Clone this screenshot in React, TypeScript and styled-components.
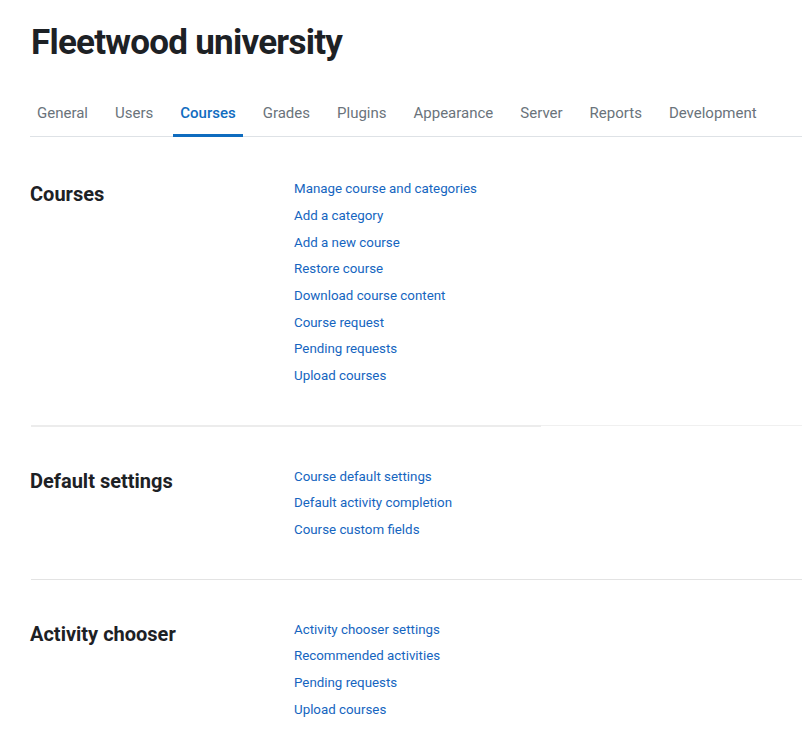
import React from "react";
import styled, { createGlobalStyle } from "styled-components";

const GlobalStyle = createGlobalStyle`
  html, body { margin: 0; padding: 0; background: #ffffff; }
  body { font-family: Roboto, "Liberation Sans", Arial, sans-serif; color: #1d2125; }
  * { box-sizing: border-box; }
`;

const Page = styled.div`
  padding: 21px 0 0 30px;
`;

const Title = styled.h1`
  margin: 0 0 0 1px;
  font-size: 35px;
  letter-spacing: -0.75px;
  line-height: 44px;
  font-weight: 700;
  color: #1d2125;
`;

const Tabs = styled.nav`
  display: flex;
  gap: 13px;
  margin-top: 29px;
  border-bottom: 1px solid #dee2e6;
  margin-bottom: 2px;
`;

const Tab = styled.a<{ $active?: boolean }>`
  display: block;
  padding: 8px 7px 10px;
  margin-bottom: -1px;
  font-size: 15px;
  line-height: 22px;
  font-weight: ${(p) => (p.$active ? 500 : 400)};
  color: ${(p) => (p.$active ? "#0f6cbf" : "#6a737b")};
  border-bottom: 3px solid ${(p) => (p.$active ? "#0f6cbf" : "transparent")};
  text-decoration: none;
  cursor: pointer;
`;

const Section = styled.section<{ $first?: boolean }>`
  display: grid;
  grid-template-columns: 264px 1fr;
  padding: ${(p) => (p.$first ? "37px" : "36px")} 0 36px;
`;

const SectionTitle = styled.h2`
  margin: 0;
  padding-top: 6px;
  font-size: 20px;
  line-height: 24px;
  font-weight: 700;
  color: #1d2125;
`;

const LinkList = styled.ul`
  list-style: none;
  margin: 0;
  padding: 0;
`;

const LinkItem = styled.li`
  height: 26.67px;
  display: flex;
  align-items: center;
`;

const Link = styled.a`
  font-size: 13.33px;
  line-height: 20px;
  color: #1565c0;
  text-decoration: none;
  cursor: pointer;
`;

const Divider = styled.hr<{ $split?: boolean }>`
  margin: 0 0 0 1px;
  border: 0;
  height: ${(p) => (p.$split ? "2px" : "1px")};
  background: ${(p) =>
    p.$split
      ? "linear-gradient(#ececec, #ececec) 0 0 / 510px 2px no-repeat, linear-gradient(#f0f0f0, #f0f0f0) 0 0 / 100% 1px no-repeat"
      : "#e3e3e3"};
`;

const tabs = [
  "General",
  "Users",
  "Courses",
  "Grades",
  "Plugins",
  "Appearance",
  "Server",
  "Reports",
  "Development",
];

const sections = [
  {
    title: "Courses",
    links: [
      "Manage course and categories",
      "Add a category",
      "Add a new course",
      "Restore course",
      "Download course content",
      "Course request",
      "Pending requests",
      "Upload courses",
    ],
  },
  {
    title: "Default settings",
    links: ["Course default settings", "Default activity completion", "Course custom fields"],
  },
  {
    title: "Activity chooser",
    links: [
      "Activity chooser settings",
      "Recommended activities",
      "Pending requests",
      "Upload courses",
    ],
  },
];

export default function App() {
  return (
    <>
      <GlobalStyle />
      <Page>
        <Title>Fleetwood university</Title>
        <Tabs>
          {tabs.map((t) => (
            <Tab key={t} $active={t === "Courses"}>
              {t}
            </Tab>
          ))}
        </Tabs>
        {sections.map((s, i) => (
          <React.Fragment key={s.title}>
            <Section $first={i === 0}>
              <SectionTitle>{s.title}</SectionTitle>
              <LinkList>
                {s.links.map((l, j) => (
                  <LinkItem key={j}>
                    <Link>{l}</Link>
                  </LinkItem>
                ))}
              </LinkList>
            </Section>
            {i < sections.length - 1 && <Divider $split={i === 0} />}
          </React.Fragment>
        ))}
      </Page>
    </>
  );
}
